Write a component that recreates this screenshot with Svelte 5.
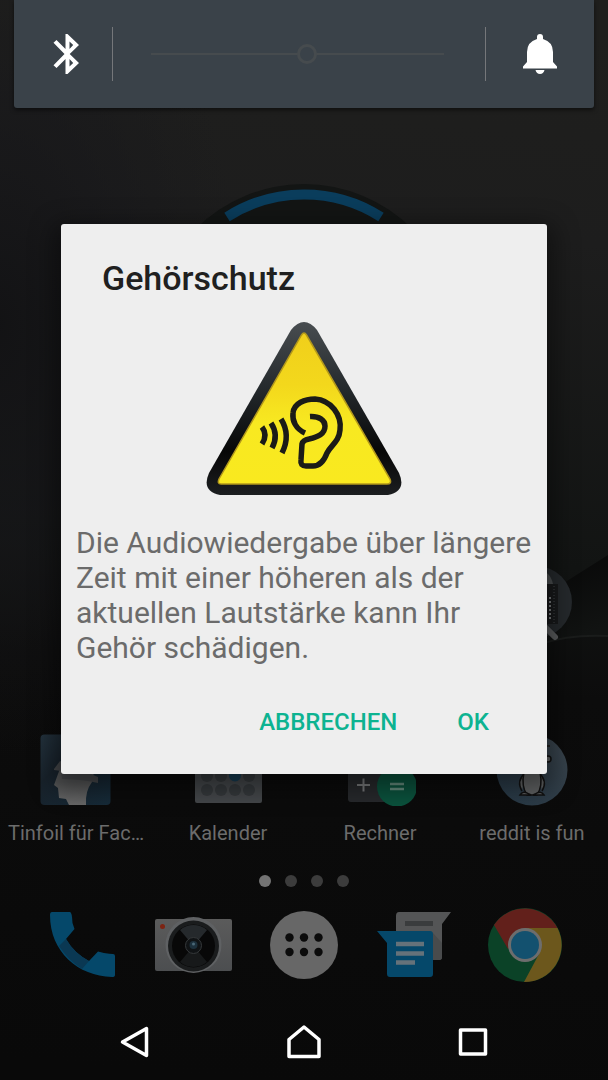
<script>
  let volume = $state(8);
  let open = $state(true);
  const pages = [0, 1, 2, 3];
</script>

<div class="screen">
  <svg class="wallpaper" viewBox="0 0 608 1080" preserveAspectRatio="none" aria-hidden="true">
    <defs>
      <linearGradient id="wall" x1="0.45" y1="0" x2="0.4" y2="1">
        <stop offset="0" stop-color="#1f1f1d" />
        <stop offset="0.2" stop-color="#1d1d1d" />
        <stop offset="0.5" stop-color="#121413" />
        <stop offset="0.62" stop-color="#0c0c0c" />
        <stop offset="1" stop-color="#090909" />
      </linearGradient>
      <radialGradient id="edge" cx="0" cy="0.3" r="0.4">
        <stop offset="0" stop-color="#121214" stop-opacity="0.9" />
        <stop offset="0.5" stop-color="#17171a" stop-opacity="0.6" />
        <stop offset="1" stop-color="#19191b" stop-opacity="0" />
      </radialGradient>
      <linearGradient id="fold" x1="0" y1="0" x2="0.3" y2="1">
        <stop offset="0" stop-color="#070707" />
        <stop offset="1" stop-color="#111312" />
      </linearGradient>
    </defs>
    <rect width="608" height="1080" fill="url(#wall)" />
    <rect width="608" height="1080" fill="url(#edge)" />
    <path d="M540 598L608 555V636Q570 636 540 644Z" fill="url(#fold)" />
    <path d="M540 644Q570 634 608 636" fill="none" stroke="#1a1c1b" stroke-width="2" />
  </svg>

  <svg class="clock" viewBox="0 0 310 310" aria-hidden="true">
    <circle cx="155" cy="155" r="153" fill="#131514" />
    <path d="M78 35A143 143 0 0 1 232 35" fill="none" stroke="#0a3d5c" stroke-width="10" />
  </svg>

  <svg class="search" viewBox="0 0 72 76" aria-hidden="true">
    <circle cx="36" cy="36" r="36" fill="#25292c" />
    <path d="M40 5q10 0 13 13H40Z" fill="#4b4e50" />
    <path d="M44 18h14v40H44Z" fill="#17191a" />
    <path d="M50 31v24" stroke="#777a7c" stroke-width="2" stroke-dasharray="2 2" />
    <path d="M54 20v37" stroke="#2c2f31" stroke-width="2" stroke-dasharray="1 2" />
    <path d="M44 60L55 71" stroke="#595b5c" stroke-width="6" stroke-linecap="round" />
  </svg>

  <main class="launcher">
    <nav class="apps" aria-label="Apps">
      <a href="#tinfoil">
        <svg viewBox="0 0 72 72" aria-hidden="true">
          <defs>
            <linearGradient id="foil" x1="0" y1="0" x2="1" y2="1">
              <stop offset="0" stop-color="#23323d" />
              <stop offset="0.35" stop-color="#18222b" />
              <stop offset="1" stop-color="#162b39" />
            </linearGradient>
            <linearGradient id="face" x1="0" y1="0" x2="0" y2="1">
              <stop offset="0.4" stop-color="#525354" />
              <stop offset="1" stop-color="#686868" />
            </linearGradient>
          </defs>
          <rect x="0.500" y="0.500" width="70" height="70.500" rx="4" fill="url(#foil)" />
          <path d="M18 40L14 51L18 54L19 64L26 65L29 71H46Q45 57 52 48L54 38L21 32Z" fill="url(#face)" />
          <path d="M14 35L20 27L58 43V49L48 47L40 46L22 45L21 37L14 36Z" fill="#45474a" />
        </svg>
        <span>Tinfoil für Fac…</span>
      </a>
      <a href="#kalender">
        <svg viewBox="0 0 72 72" aria-hidden="true">
          <rect x="3" y="6" width="67" height="63" rx="2" fill="#44474a" />
          <g fill="#35393c">
            <circle cx="15" cy="42" r="6" /><circle cx="29" cy="42" r="6" /><circle cx="57" cy="42" r="6" />
            <circle cx="15" cy="56" r="6" /><circle cx="29" cy="56" r="6" /><circle cx="43" cy="56" r="6" /><circle cx="57" cy="56" r="6" />
          </g>
          <circle cx="43" cy="41.500" r="6" fill="#173c52" />
        </svg>
        <span>Kalender</span>
      </a>
      <a href="#rechner">
        <svg viewBox="0 0 72 72" aria-hidden="true">
          <rect x="4" y="6" width="60" height="62" rx="3" fill="#27292c" />
          <path d="M13 51H26M19.500 44.500V57.500" stroke="#77797a" stroke-width="2" />
          <circle cx="53" cy="52.500" r="20" fill="#0b523d" />
          <path d="M46 50H60M46 55H60" stroke="#658b7d" stroke-width="2.500" />
        </svg>
        <span>Rechner</span>
      </a>
      <a href="#reddit">
        <svg viewBox="0 0 72 72" aria-hidden="true">
          <defs>
            <linearGradient id="sky" x1="0" y1="1" x2="1" y2="0">
              <stop offset="0" stop-color="#263846" />
              <stop offset="1" stop-color="#3b454d" />
            </linearGradient>
          </defs>
          <circle cx="36" cy="36" r="35.500" fill="url(#sky)" />
          <g fill="#606263" stroke="#111" stroke-width="1.500">
            <ellipse cx="36" cy="27" rx="13" ry="9" />
            <circle cx="52" cy="25" r="3" />
            <path d="M29 39q-9 8-3 18M43 39q9 8 3 18" />
            <path d="M28 38h16q3 14-3 23H31Q25 52 28 38Z" />
            <path d="M24 61q3-5 9-1l2 1ZM48 61q-3-5-9-1l-2 1Z" />
          </g>
          <path d="M50 12h4" stroke="#222" stroke-width="2" />
        </svg>
        <span>reddit is fun</span>
      </a>
    </nav>

    <div class="dots" aria-hidden="true">
      {#each pages as page}
        <i class:active={page === 0}></i>
      {/each}
    </div>

    <nav class="dock" aria-label="Dock">
      <a href="#telefon" aria-label="Telefon">
        <svg viewBox="0 0 80 80" aria-hidden="true">
          <path d="M10 7H28Q30 7 30.500 18L32.500 24L24 34Q32 48 47 56L56 46.500L62 48Q68 49 71 49Q73 49 73 51V70Q73 72 70 72C36 71 8 47 8 10Q8 7 10 7Z" fill="#05486a" />
          <path d="M24 34Q32 48 47 56L40 64Q26 55 17 41Z" fill="#0a3853" />
        </svg>
      </a>
      <a href="#kamera" aria-label="Kamera">
        <svg viewBox="0 0 80 80" aria-hidden="true">
          <defs>
            <linearGradient id="body" x1="0" y1="0" x2="0" y2="1">
              <stop offset="0" stop-color="#5b5b5b" />
              <stop offset="1" stop-color="#4c4e50" />
            </linearGradient>
          </defs>
          <rect x="2" y="14" width="77" height="52" rx="2" fill="url(#body)" />
          <circle cx="9.500" cy="21.500" r="2.500" fill="#7d2413" />
          <circle cx="40.500" cy="40" r="28" fill="#5f6163" />
          <circle cx="40.500" cy="41" r="25.500" fill="#1a1c1d" />
          <circle cx="40.500" cy="41" r="21.500" fill="#080808" />
          <path d="M40.500 41L27 25a21 21 0 0 1 27 0Z" fill="#25292c" />
          <path d="M40.500 41L27 57a21 21 0 0 0 27 0Z" fill="#17191a" />
          <circle cx="40.500" cy="40.500" r="8" fill="#101315" stroke="#35383a" stroke-width="1" />
          <circle cx="40.500" cy="40" r="4" fill="#1c303c" />
          <circle cx="40.500" cy="39" r="1.500" fill="#4a6878" />
        </svg>
      </a>
      <a href="#apps" aria-label="Alle Apps">
        <svg viewBox="0 0 80 80" aria-hidden="true">
          <circle cx="40" cy="40" r="34" fill="#676767" />
          <g fill="#0b0b0b">
            <circle cx="25.500" cy="32.500" r="4.200" /><circle cx="40" cy="32.500" r="4.200" /><circle cx="54.500" cy="32.500" r="4.200" />
            <circle cx="25.500" cy="47" r="4.200" /><circle cx="40" cy="47" r="4.200" /><circle cx="54.500" cy="47" r="4.200" />
          </g>
        </svg>
      </a>
      <a href="#nachrichten" aria-label="Nachrichten">
        <svg viewBox="0 0 80 80" aria-hidden="true">
          <path d="M24 7H76L67 19V52Q67 55 64 55H24Q21 55 21 52V11Q21 7 24 7Z" fill="#545556" />
          <path d="M30 18.500H58" stroke="#3a3c3d" stroke-width="5" />
          <path d="M58 28L67 38V52Q67 55 64 55H58Z" fill="#494b4c" />
          <path d="M2 26H55Q58 26 58 29V69Q58 72 55 72H15Q12 72 12 69V38Z" fill="#05486a" />
          <path d="M21 39H49M21 48.500H49M21 57.500H40" stroke="#65727a" stroke-width="4.500" />
        </svg>
      </a>
      <a href="#chrome" aria-label="Chrome">
        <svg viewBox="0 0 80 80" aria-hidden="true">
          <circle cx="39" cy="40" r="37" fill="#0b4227" />
          <path d="M8 20A37 37 0 0 1 71.500 23H39L22 44Z" fill="#62201b" />
          <path d="M39 23H71.500A37 37 0 0 1 38 77L53 49Z" fill="#6c571c" />
          <circle cx="39" cy="40" r="17" fill="#6d6d6d" />
          <circle cx="39" cy="40" r="14" fill="#13516f" />
        </svg>
      </a>
    </nav>
  </main>

  <nav class="system" aria-label="Navigation">
    <button aria-label="Zurück">
      <svg viewBox="0 0 40 40"><path d="M7.500 20L31.500 6.500V33.500Z" /></svg>
    </button>
    <button aria-label="Startseite">
      <svg viewBox="0 0 40 40"><path d="M5 34.500V17.500L20 5L35 17.500V34.500Z" /></svg>
    </button>
    <button aria-label="Übersicht">
      <svg viewBox="0 0 40 40"><path d="M7.500 8H32.500V32H7.500Z" /></svg>
    </button>
  </nav>

  <div class="overlay">
    <section class="volume" aria-label="Lautstärke">
      <button class="bluetooth" aria-label="Bluetooth">
        <svg viewBox="0 0 40 40" aria-hidden="true">
          <path fill-rule="evenodd" d="M34 11L22.500 0H20.500V15L11.500 6L8.500 8.800L19.500 20L8.500 31.200L11.500 34L20.500 25V40H22.500L34 29L24.700 20ZM24.500 7.500L28.200 11L24.500 15ZM28.200 29L24.500 32.500V25Z" />
        </svg>
      </button>
      <div class="level">
        <input type="range" min="0" max="15" bind:value={volume} aria-label="Medienlautstärke" />
      </div>
      <button class="bell" aria-label="Benachrichtigungen">
        <svg viewBox="0 0 40 40" aria-hidden="true">
          <path d="M20 0Q23 0 23 3V5Q33 8 33 18V28L37 32.500V34.500H3V32.500L7 28V18Q7 8 17 5V3Q17 0 20 0Z" />
          <path d="M15.500 36H24.500Q23.500 40 20 40Q16.500 40 15.500 36Z" />
        </svg>
      </button>
    </section>

    {#if open}
      <div class="dialog" role="alertdialog" aria-labelledby="title" aria-describedby="message">
        <h1 id="title">Gehörschutz</h1>
        <svg class="warning" viewBox="0 0 196 174" aria-hidden="true">
          <defs>
            <linearGradient id="frame" x1="0" y1="0" x2="0" y2="1">
              <stop offset="0" stop-color="#484d50" />
              <stop offset="0.4" stop-color="#23282b" />
              <stop offset="0.75" stop-color="#070707" />
              <stop offset="1" stop-color="#1c1e20" />
            </linearGradient>
            <linearGradient id="yellow" x1="0" y1="0" x2="0" y2="1">
              <stop offset="0" stop-color="#f0cf1b" />
              <stop offset="0.35" stop-color="#f3d81c" />
              <stop offset="0.6" stop-color="#f8e921" />
              <stop offset="1" stop-color="#f9e91f" />
            </linearGradient>
          </defs>
          <path d="M85 8Q98-8 111 8L193 151Q201 169 182 173H14Q-5 169 3 151Z" fill="url(#frame)" />
          <path d="M95.500 13Q98 9 100.500 13L184 157Q186 162 181 162H15Q11 162 13 157Z" fill="url(#yellow)" stroke="#b3981b" stroke-width="1.500" />
          <g fill="none" stroke="#1b1b17" stroke-width="5.500">
            <path d="M99 111C90 107 86 99 87 91C88 81 99 77 109 77C125 78 136 93 134 108C133 120 125 123 121 131C118 139 114 144 107 144H100Q94 144 95 138L96 122Q97 118 103 117C112 115 119 112 119 104C119 98 113 94 104 94.500" />
            <path d="M56 105Q62 113 56 122M65 101Q73 113 66 126M75 97Q85 113 76 131" />
          </g>
        </svg>
        <p id="message">Die Audiowiedergabe über längere Zeit mit einer höheren als der aktuellen Lautstärke kann Ihr Gehör schädigen.</p>
        <div class="actions">
          <button onclick={() => (open = false)}>ABBRECHEN</button>
          <button onclick={() => (open = false)}>OK</button>
        </div>
      </div>
    {/if}
  </div>
</div>

<style>
  :global(body) {
    margin: 0;
    background: #090909;
    font-family: Roboto, "Noto Sans", sans-serif;
  }
  .screen {
    position: relative;
    min-height: 100vh;
    display: flex;
    flex-direction: column;
    isolation: isolate;
    overflow: hidden;
  }
  svg {
    display: block;
  }
  button {
    border: 0;
    padding: 0;
    background: none;
    font: inherit;
    color: inherit;
    cursor: pointer;
  }
  .wallpaper {
    position: absolute;
    inset: 0;
    width: 100%;
    height: 100%;
    z-index: -2;
  }
  .clock {
    position: absolute;
    top: 182px;
    left: 50%;
    width: 310px;
    translate: -50% 0;
    z-index: -1;
  }
  .search {
    position: absolute;
    top: 566px;
    right: 36px;
    width: 72px;
    z-index: -1;
  }
  .launcher {
    flex: 1;
    display: flex;
    flex-direction: column;
    justify-content: flex-end;
    padding-top: 734px;
  }
  .apps {
    display: grid;
    grid-template-columns: repeat(4, 1fr);
  }
  .apps a {
    display: flex;
    flex-direction: column;
    align-items: center;
    gap: 14px;
    color: #6c6c6c;
    font-size: 20px;
    line-height: 26px;
    text-decoration: none;
    white-space: nowrap;
  }
  .apps svg {
    width: 72px;
    height: 72px;
  }
  .dots {
    display: flex;
    justify-content: center;
    gap: 14px;
    margin-top: 29px;
  }
  .dots i {
    width: 12px;
    height: 12px;
    border-radius: 50%;
    background: #3c3c3c;
  }
  .dots .active {
    background: #737373;
  }
  .dock {
    display: grid;
    grid-template-columns: repeat(5, 1fr);
    justify-items: center;
    padding: 18px 27px 19px;
  }
  .dock svg {
    width: 80px;
    height: 80px;
  }
  .system {
    display: grid;
    grid-template-columns: repeat(3, 169px);
    justify-content: center;
    height: 76px;
  }
  .system button {
    display: grid;
    place-items: center;
  }
  .system svg {
    width: 40px;
    height: 40px;
    fill: none;
    stroke: #fff;
    stroke-width: 3.5;
    stroke-linejoin: round;
  }
  .overlay {
    position: absolute;
    inset: 0;
  }
  .volume {
    display: flex;
    align-items: center;
    height: 108px;
    margin: 0 14px;
    border-radius: 0 0 3px 3px;
    background: #3a4249;
    box-shadow: 0 2px 4px #0008;
  }
  .volume button {
    display: grid;
    place-items: center;
    height: 54px;
  }
  .volume .bluetooth {
    width: 99px;
    padding-left: 4px;
    border-right: 1px solid #75777a;
  }
  .volume .bell {
    width: 109px;
    border-left: 1px solid #75777a;
  }
  .volume svg {
    width: 40px;
    height: 40px;
    fill: #fff;
  }
  .level {
    flex: 1;
    display: flex;
    padding: 0 41px 0 38px;
  }
  input {
    appearance: none;
    width: 100%;
    height: 20px;
    margin: 0;
    background: linear-gradient(#464b4e, #464b4e) center / 100% 2px no-repeat;
  }
  input::-webkit-slider-thumb {
    appearance: none;
    box-sizing: border-box;
    width: 20px;
    height: 20px;
    border: 3px solid #464b4e;
    border-radius: 50%;
    background: #3a4249;
  }
  .dialog {
    margin: 116px 61px 0;
    border-radius: 3px;
    background: #eee;
    box-shadow: 0 8px 24px 8px #0006;
  }
  h1 {
    margin: 0;
    padding: 34px 41px 24px;
    font-size: 34px;
    line-height: 40px;
    font-weight: 500;
    color: #202020;
  }
  .warning {
    width: 196px;
    margin: 0 auto;
  }
  p {
    margin: 0;
    padding: 29px 0 0 15px;
    font-size: 30px;
    line-height: 35px;
    color: #6b6b6b;
  }
  .actions {
    display: flex;
    justify-content: flex-end;
    gap: 60px;
    padding: 42px 58px 37px;
    color: #0db391;
    font-size: 24px;
    line-height: 30px;
    font-weight: 500;
  }
</style>
